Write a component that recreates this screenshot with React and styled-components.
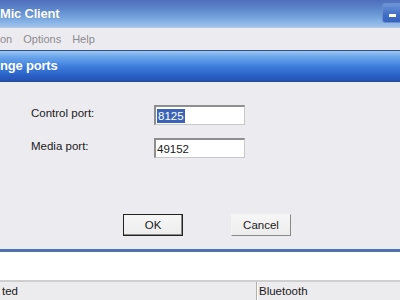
import React from 'react'
import styled, { createGlobalStyle } from 'styled-components'

const Global = createGlobalStyle`
  html, body { margin: 0; padding: 0; }
  body {
    width: 400px;
    height: 300px;
    overflow: hidden;
    background: #ecebf0;
    font-family: 'Liberation Sans', Arial, sans-serif;
  }
`

export default function App() {
  return (
    <Window>
      <Global />
      <TitleBar>
        <TitleText>Mic Client</TitleText>
        <MinButton><span /></MinButton>
      </TitleBar>
      <MenuBar>
        <MenuItem>on</MenuItem>
        <MenuItem>Options</MenuItem>
        <MenuItem>Help</MenuItem>
      </MenuBar>
      <Dialog>
        <DialogTitle>nge ports</DialogTitle>
        <DialogBody>
          <FieldGrid>
            <Label>Control port:</Label>
            <Input><Selected>8125</Selected></Input>
            <Label>Media port:</Label>
            <Input>49152</Input>
          </FieldGrid>
          <Buttons>
            <Button $default>OK</Button>
            <Button>Cancel</Button>
          </Buttons>
        </DialogBody>
      </Dialog>
      <Pane />
      <StatusBar>
        <StatusCell $w="256px">ted</StatusCell>
        <StatusCell>Bluetooth</StatusCell>
      </StatusBar>
    </Window>
  )
}

const Window = styled.div`
  width: 400px;
  height: 300px;
  display: flex;
  flex-direction: column;
  background: #ecebf0;
`

const TitleBar = styled.div`
  height: 27px;
  flex: none;
  display: flex;
  align-items: center;
  justify-content: space-between;
  background: linear-gradient(180deg, #4f6fbd 0%, #5e88cc 35%, #7aa8df 70%, #9ec4ef 100%);
  border-bottom: 1px solid #b8c8dc;
`

const TitleText = styled.div`
  font-family: 'Liberation Sans', Arial, sans-serif;
  font-weight: bold;
  font-size: 13px;
  color: #ffffff;
  margin-top: -1px;
  letter-spacing: -0.2px;
  text-shadow: 0 0 1px rgba(40, 70, 140, 0.4);
`

const MinButton = styled.div`
  width: 21px;
  height: 20px;
  margin-right: -3px;
  margin-top: -2px;
  box-sizing: border-box;
  border: 1px solid #6c8fcc;
  border-radius: 3px;
  background: linear-gradient(180deg, #6d95d6 0%, #3f6dc6 60%, #3563be 100%);
  display: flex;
  align-items: flex-end;
  justify-content: center;
  padding-bottom: 5px;
  span {
    width: 7px;
    height: 3px;
    background: #ffffff;
  }
`

const MenuBar = styled.div`
  height: 21px;
  flex: none;
  display: flex;
  align-items: center;
  gap: 11px;
  background: #ecebef;
  font-size: 11px;
  color: #8c8c90;
  padding-bottom: 1px;
`

const MenuItem = styled.span``

const Dialog = styled.div`
  flex: none;
  display: flex;
  flex-direction: column;
  border-top: 1px solid #34517e;
`

const DialogTitle = styled.div`
  height: 29px;
  display: flex;
  align-items: center;
  font-family: 'Liberation Sans', Arial, sans-serif;
  font-weight: bold;
  font-size: 13px;
  letter-spacing: -0.2px;
  color: #ffffff;
  background: linear-gradient(180deg, #9cc8f4 0%, #6ea8ec 18%, #3f80de 50%, #2a62c8 80%, #2552b2 100%);
  border-bottom: 1px solid #2a4a9a;
  padding-bottom: 1px;
`

const DialogBody = styled.div`
  height: 167px;
  display: flex;
  flex-direction: column;
  padding: 23px 0 0 31px;
  box-sizing: border-box;
  background: #ecebf0;
`

const FieldGrid = styled.div`
  display: grid;
  grid-template-columns: 123px 91px;
  row-gap: 13px;
  align-items: start;
`

const Label = styled.div`
  font-size: 11.5px;
  color: #1a1a1a;
  line-height: 14px;
  padding-top: 1px;
`

const Input = styled.div`
  height: 20px;
  box-sizing: border-box;
  background: #ffffff;
  border: 1px solid #c8c8c8;
  border-top: 2px solid #8e8e8e;
  border-left: 2px solid #8e8e8e;
  font-size: 11.5px;
  color: #1a1a1a;
  display: flex;
  align-items: center;
  padding-left: 1px;
`

const Selected = styled.span`
  background: #3a63b8;
  color: #ffffff;
  padding: 1px 1px;
`

const Buttons = styled.div`
  display: flex;
  gap: 48px;
  margin-top: 56px;
  margin-left: 92px;
`

const Button = styled.div`
  width: 60px;
  height: 22px;
  box-sizing: border-box;
  display: flex;
  align-items: center;
  justify-content: center;
  font-size: 11.5px;
  color: #1a1a1a;
  background: linear-gradient(180deg, #f6f6f6 0%, #ececec 100%);
  border: 1px solid ${({ $default }) => ($default ? '#222222' : '#f4f4f4')};
  border-right-color: ${({ $default }) => ($default ? '#222222' : '#8a8a8a')};
  border-bottom-color: ${({ $default }) => ($default ? '#222222' : '#8a8a8a')};
  box-shadow: ${({ $default }) => ($default ? 'inset -1px -1px 0 #8a8a8a' : 'none')};
`

const Pane = styled.div`
  flex: none;
  height: 28px;
  background: #ffffff;
  border-top: 3px solid #4d72ac;
`

const StatusBar = styled.div`
  flex: 1;
  display: flex;
  background: #ecebee;
  border-top: 2px solid #cfcfd2;
`

const StatusCell = styled.div`
  width: ${({ $w }) => $w || 'auto'};
  flex: ${({ $w }) => ($w ? 'none' : '1')};
  box-sizing: border-box;
  padding-left: 2px;
  display: flex;
  align-items: center;
  font-size: 11.5px;
  color: #1a1a1a;
  & + & {
    border-left: 1px solid #b0b0b0;
    box-shadow: inset 1px 0 0 #ffffff;
  }
`
